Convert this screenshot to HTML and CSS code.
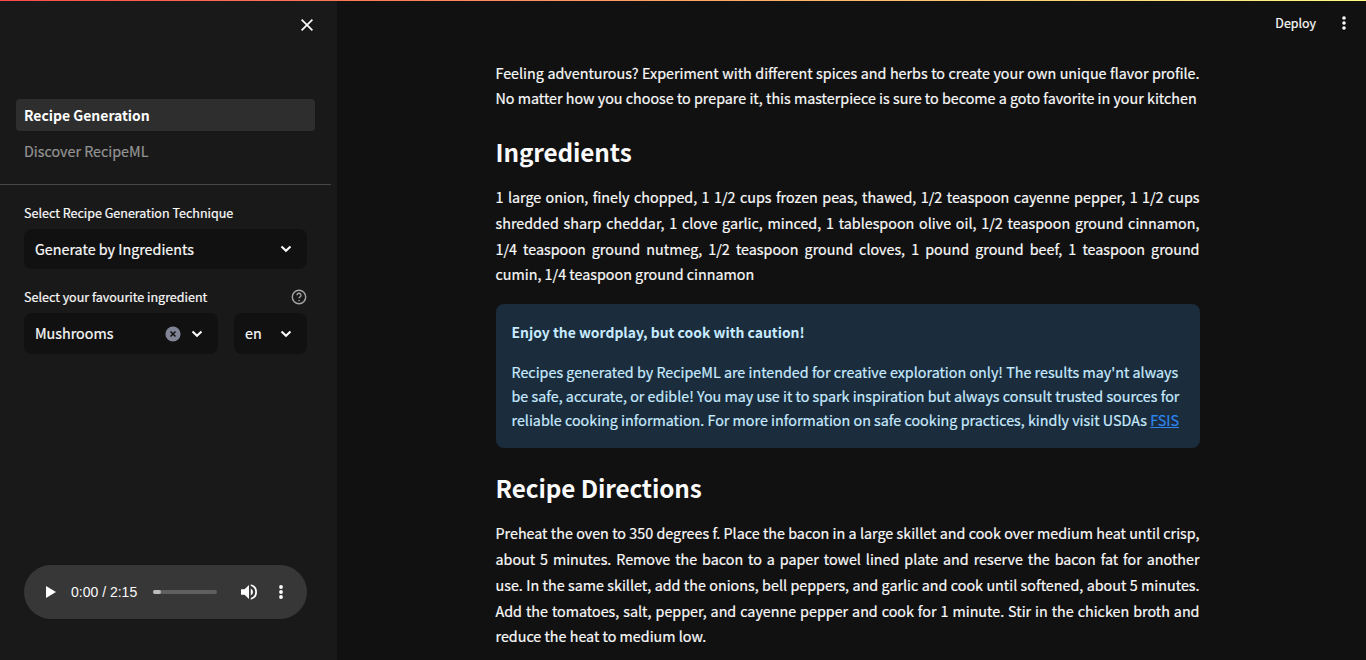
FILE: index.html
```html
<!DOCTYPE html>
<html lang="en">
<head>
<meta charset="utf-8">
<title>Recipe Generation</title>
<link rel="stylesheet" href="styles.css">
</head>
<body>
<div class="decoration"></div>
<div class="app">
  <aside class="sidebar">
    <div class="sidebar-head">
      <svg class="close" viewBox="0 0 20 20" width="20" height="20"><path d="M4.6 4.6 15.4 15.4M15.4 4.6 4.6 15.4"/></svg>
    </div>
    <nav class="nav">
      <a class="nav-link active">Recipe Generation</a>
      <a class="nav-link">Discover RecipeML</a>
    </nav>
    <div class="controls">
      <div class="label-row"><span class="label">Select Recipe Generation Technique</span></div>
      <div class="select">
        <span class="value">Generate by Ingredients</span>
        <svg class="chevron" viewBox="0 0 12 8" width="12" height="8"><path d="M1.5 1.5 6 5.8 10.5 1.5"/></svg>
      </div>
      <div class="label-row second"><span class="label">Select your favourite ingredient</span>
        <svg class="help" viewBox="0 0 16 16" width="16" height="16"><circle cx="8" cy="8" r="6.7"/><path d="M6 6.3a2 2 0 1 1 3 1.7c-.7.4-1 .7-1 1.3M8 11v1.2"/></svg>
      </div>
      <div class="pair">
        <div class="select wide">
          <span class="value">Mushrooms</span>
          <svg class="clear" viewBox="0 0 16 16" width="16" height="16"><circle cx="8" cy="8" r="7.6"/><path d="M5.5 5.5l5 5M10.5 5.5l-5 5"/></svg>
          <svg class="chevron" viewBox="0 0 12 8" width="12" height="8"><path d="M1.5 1.5 6 5.8 10.5 1.5"/></svg>
        </div>
        <div class="select narrow">
          <span class="value">en</span>
          <svg class="chevron" viewBox="0 0 12 8" width="12" height="8"><path d="M1.5 1.5 6 5.8 10.5 1.5"/></svg>
        </div>
      </div>
    </div>
    <div class="player">
      <svg class="play" viewBox="0 0 10 12" width="10" height="12"><path d="M0 0v12l10-6z"/></svg>
      <span class="time">0:00 / 2:15</span>
      <span class="track"><span class="buffer"></span></span>
      <svg class="volume" viewBox="3 3 18 18" width="16" height="16"><path d="M3 9v6h4l5 5V4L7 9H3zm13.5 3A4.5 4.5 0 0 0 14 7.97v8.05A4.5 4.5 0 0 0 16.5 12zM14 3.23v2.06a7 7 0 0 1 0 13.42v2.06a9 9 0 0 0 0-17.54z"/></svg>
      <svg class="dots" viewBox="0 0 4 14" width="4" height="14"><circle cx="2" cy="2" r="1.9"/><circle cx="2" cy="7" r="1.9"/><circle cx="2" cy="12" r="1.9"/></svg>
    </div>
  </aside>
  <main class="main">
    <header class="toolbar">
      <span class="deploy">Deploy</span>
      <svg class="dots" viewBox="0 0 4 14" width="4" height="14"><circle cx="2" cy="2" r="1.8"/><circle cx="2" cy="7" r="1.8"/><circle cx="2" cy="12" r="1.8"/></svg>
    </header>
    <article class="content">
      <div class="text intro">
        <p class="full">Feeling adventurous? Experiment with different spices and herbs to create your own unique flavor profile.</p>
        <p>No matter how you choose to prepare it, this masterpiece is sure to become a goto favorite in your kitchen</p>
      </div>
      <h3 class="heading">Ingredients</h3>
      <div class="text ingredients">
        <p class="full">1 large onion, finely chopped, 1 1/2 cups frozen peas, thawed, 1/2 teaspoon cayenne pepper, 1 1/2 cups</p>
        <p class="full">shredded sharp cheddar, 1 clove garlic, minced, 1 tablespoon olive oil, 1/2 teaspoon ground cinnamon,</p>
        <p class="full">1/4 teaspoon ground nutmeg, 1/2 teaspoon ground cloves, 1 pound ground beef, 1 teaspoon ground</p>
        <p>cumin, 1/4 teaspoon ground cinnamon</p>
      </div>
      <div class="notice">
        <p class="notice-title">Enjoy the wordplay, but cook with caution!</p>
        <p>Recipes generated by RecipeML are intended for creative exploration only! The results may'nt always</p>
        <p>be safe, accurate, or edible! You may use it to spark inspiration but always consult trusted sources for</p>
        <p>reliable cooking information. For more information on safe cooking practices, kindly visit USDAs <a class="link">FSIS</a></p>
      </div>
      <h3 class="heading directions-title">Recipe Directions</h3>
      <div class="text directions">
        <p class="full">Preheat the oven to 350 degrees f. Place the bacon in a large skillet and cook over medium heat until crisp,</p>
        <p class="full">about 5 minutes. Remove the bacon to a paper towel lined plate and reserve the bacon fat for another</p>
        <p class="full">use. In the same skillet, add the onions, bell peppers, and garlic and cook until softened, about 5 minutes.</p>
        <p class="full">Add the tomatoes, salt, pepper, and cayenne pepper and cook for 1 minute. Stir in the chicken broth and</p>
        <p>reduce the heat to medium low.</p>
      </div>
    </article>
  </main>
</div>
</body>
</html>
```
FILE: styles.css
```css
* { box-sizing: border-box; }
body {
  margin: 0;
  height: 660px;
  overflow: hidden;
  background: #111111;
  color: #fafafa;
  font-family: "Noto Sans CJK SC", "Noto Sans", sans-serif;
  font-size: 14.325px;
  -webkit-text-stroke: 0.2px currentColor;
}
p, h3 { margin: 0; }
.decoration { height: 1px; background: linear-gradient(90deg, #ff4b4b, #fffd80); }
.app { display: flex; height: 659px; }
.sidebar {
  width: 337px;
  flex: none;
  background: #191919;
  display: flex;
  flex-direction: column;
}
.sidebar-head { display: flex; justify-content: flex-end; padding: 14px 20px 0 0; height: 98px; }
svg { display: block; flex: none; }
.close { stroke: #fafafa; stroke-width: 1.7; fill: none; }
.nav {
  width: 331px;
  height: 86px;
  padding: 0 16px;
  border-bottom: 1px solid #474747;
}
.nav-link {
  display: block;
  height: 32px;
  line-height: 32px;
  padding: 0 8px;
  margin-bottom: 4px;
  border-radius: 4px;
  color: #949494;
}
.nav-link.active {
  background: #2e2e2e;
  color: #ffffff;
  font-size: 13.95px;
  font-weight: 700;
  -webkit-text-stroke: 0;
}
.controls { width: 283px; margin-left: 24px; padding-top: 18px; }
.label-row {
  display: flex;
  justify-content: space-between;
  align-items: center;
  height: 20px;
  margin-bottom: 6px;
  font-size: 12.53px;
}
.label { padding-bottom: 2px; }
.label-row.second { margin-top: 18px; }
.help { stroke: #a5a5a5; stroke-width: 1.4; fill: none; }
.select {
  display: flex;
  align-items: center;
  height: 40px;
  padding: 0 15px 0 11px;
  border-radius: 8px;
  background: #111111;
}
.value { flex: 1; padding-bottom: 2px; }
.chevron { stroke: #fafafa; stroke-width: 2.1; fill: none; }
.pair { display: flex; gap: 16px; }
.pair .select { height: 41px; padding-top: 1px; }
.pair .value { padding-bottom: 3px; }
.wide { width: 194px; }
.narrow { width: 73px; }
.clear { margin-right: 10px; fill: #808495; stroke: none; }
.clear path { stroke: #111111; stroke-width: 1.5; }
.player {
  display: flex;
  align-items: center;
  width: 283px;
  height: 54px;
  margin: auto 0 41px 24px;
  padding-left: 22px;
  border-radius: 27px;
  background: #373737;
  fill: #ffffff;
}
.time {
  margin-left: 15px;
  width: 82px;
  font: 14px "Liberation Sans", Arial, sans-serif;
  white-space: nowrap;
  -webkit-text-stroke: 0;
}
.track { width: 64px; height: 4px; border-radius: 2px; background: #5f5f5f; }
.buffer { display: block; width: 8px; height: 4px; border-radius: 2px; background: #bcbcbc; }
.volume { margin-left: 24px; }
.player .dots { margin-left: 22px; }
.main { flex: 1; }
.toolbar {
  display: flex;
  justify-content: flex-end;
  align-items: center;
  height: 44px;
  padding-right: 20px;
  gap: 26px;
  font-size: 12.45px;
}
.deploy { padding-bottom: 0.6px; }
.toolbar .dots { fill: #fafafa; }
.content { width: 704px; margin-left: 158.5px; padding-top: 14.6px; }
.text { line-height: 25.6px; white-space: nowrap; }
.full { text-align: justify; text-align-last: justify; }
.heading {
  margin-top: 21.4px;
  height: 40px;
  line-height: 40px;
  font-size: 24.3px;
  font-weight: 700;
  letter-spacing: -0.1px;
  -webkit-text-stroke: 0;
}
.ingredients { margin-top: 12.2px; }
.notice {
  margin: 17.3px -0.5px 0 0.5px;
  height: 144px;
  padding: 16px 15.5px;
  border-radius: 8px;
  background: #1b2c3d;
  color: #c7ebff;
  line-height: 24px;
  white-space: nowrap;
}
.notice-title { font-weight: 700; font-size: 13.92px; margin-bottom: 16px; -webkit-text-stroke: 0; }
.link { color: #2f86f0; text-decoration: underline; }
.directions-title { margin-top: 19.6px; }
.directions { margin-top: 13.1px; }
.directions p:first-child { margin-top: -0.3px; margin-bottom: 0.3px; }
```
